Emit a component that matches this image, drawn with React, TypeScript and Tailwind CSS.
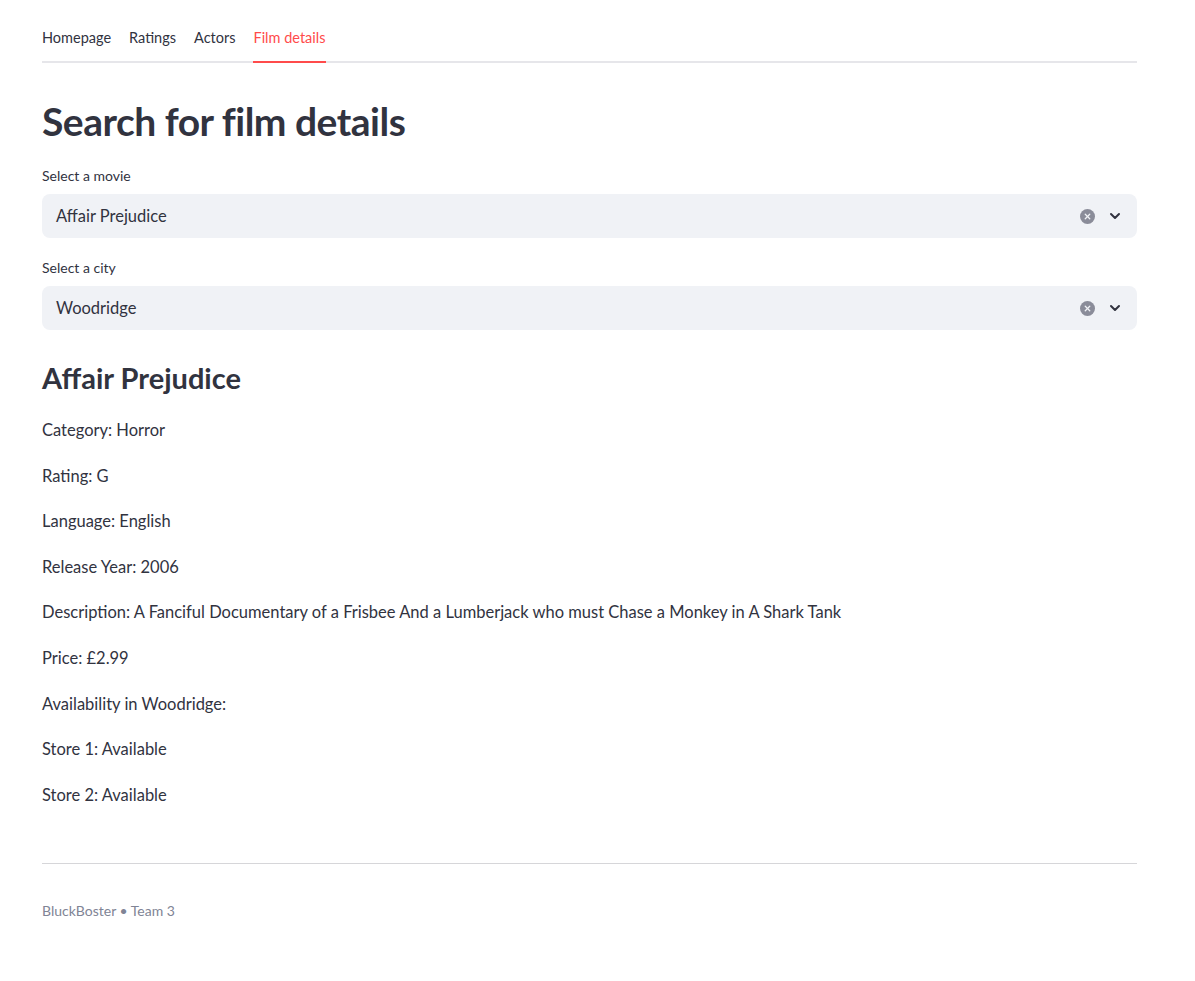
import { ChevronDown, X } from 'lucide-react';

const tabs = ['Homepage', 'Ratings', 'Actors', 'Film details'];

const details = [
  'Category: Horror',
  'Rating: G',
  'Language: English',
  'Release Year: 2006',
  'Description: A Fanciful Documentary of a Frisbee And a Lumberjack who must Chase a Monkey in A Shark Tank',
  'Price: £2.99',
  'Availability in Woodridge:',
  'Store 1: Available',
  'Store 2: Available',
];

function SelectBox({ label, value }: { label: string; value: string }) {
  return (
    <div className="flex flex-col">
      <label className="text-[14px] leading-[20px] h-[20px] mb-[8px]">{label}</label>
      <div className="h-[44px] rounded-[8px] bg-[#f0f2f6] flex items-center pl-[14px] pr-[14px]">
        <span className="flex-1 text-[16.5px]">{value}</span>
        <span className="w-[15px] h-[15px] rounded-full bg-[#8a8c99] flex items-center justify-center mr-[12px]">
          <X className="w-[9px] h-[9px] text-[#f0f2f6]" strokeWidth={3.5} />
        </span>
        <ChevronDown className="w-[16px] h-[16px] text-[#31333f]" strokeWidth={3} />
      </div>
    </div>
  );
}

export default function App() {
  return (
    <div className="min-h-screen bg-white text-[#31333f] font-['Lato',sans-serif]">
      <div className="ml-[42px] w-[1095px] pt-[24px]">
        <div className="flex gap-[18px] border-b-2 border-[#e6e6ea] h-[39px]">
          {tabs.map((t) => (
            <div
              key={t}
              className={`text-[14.5px] leading-[28px] h-[39px] ${
                t === 'Film details' ? 'text-[#ff4b4b] border-b-2 border-[#ff4b4b] -mb-[2px] h-[39px]' : ''
              }`}
            >
              {t}
            </div>
          ))}
        </div>

        <h1 className="text-[39px] font-bold leading-[52px] mt-[32px] tracking-[-0.5px]">Search for film details</h1>

        <div className="mt-[19px] flex flex-col gap-[20px]">
          <SelectBox label="Select a movie" value="Affair Prejudice" />
          <SelectBox label="Select a city" value="Woodridge" />
        </div>

        <h2 className="text-[29px] font-bold leading-[40px] mt-[28px]">Affair Prejudice</h2>

        <div className="flex flex-col mt-[20px]">
          {details.map((d) => (
            <p key={d} className="text-[16.5px] leading-[25.6px] h-[45.6px]">
              {d}
            </p>
          ))}
        </div>

        <hr className="border-0 border-t border-[#d6d6d9] mt-[35px]" />

        <p className="text-[14px] text-[#808495] mt-[36px]">BluckBoster • Team 3</p>
      </div>
    </div>
  );
}
